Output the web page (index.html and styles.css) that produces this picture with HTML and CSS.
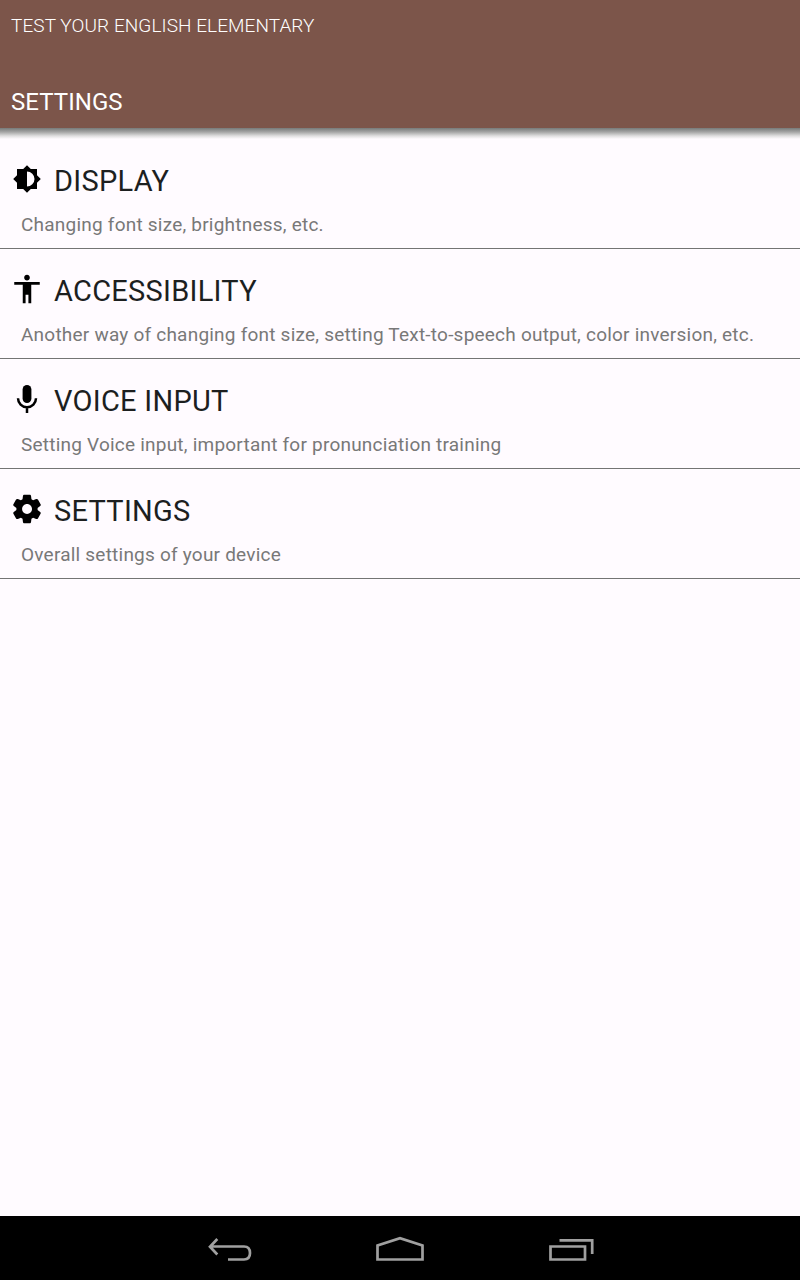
FILE: index.html
```
<!DOCTYPE html>
<html lang="en">
<head>
<meta charset="utf-8">
<title>Settings</title>
<link rel="stylesheet" href="styles.css">
</head>
<body>
<header class="header">
  <div class="app-name"><span>TEST YOUR ENGLISH ELEMENTARY</span></div>
  <h1 class="page-title">SETTINGS</h1>
</header>
<main class="content">
  <section class="item">
    <div class="row">
      <svg class="icon" viewBox="-17 -17 34 34"><path fill-rule="evenodd" d="M0-13.8L3.8-10H10V-3.8L13.8 0 10 3.8V10H3.8L0 13.8-3.8 10H-10V3.8L-13.8 0-10-3.8V-10H-3.8zM0-7.5V7.5A7.5 7.5 0 0 0 0-7.5z"/></svg>
      <h2 class="name">DISPLAY</h2>
    </div>
    <p class="desc">Changing font size, brightness, etc.</p>
  </section>
  <section class="item">
    <div class="row">
      <svg class="icon" viewBox="0 0 24 24"><path d="M12 2c1.1 0 2 .9 2 2s-.9 2-2 2-2-.9-2-2 .9-2 2-2zm9 7h-6v13h-2v-6h-2v6H9V9H3V7h18v2z"/></svg>
      <h2 class="name">ACCESSIBILITY</h2>
    </div>
    <p class="desc">Another way of changing font size, setting Text-to-speech output, color inversion, etc.</p>
  </section>
  <section class="item">
    <div class="row">
      <svg class="icon" viewBox="-17 -17 34 34"><rect x="-4.4" y="-14" width="8.8" height="18" rx="4.4"/><path class="mic-stand" d="M-9-.8a9 9 0 0 0 18 0M0 8.2V14"/></svg>
      <h2 class="name">VOICE INPUT</h2>
    </div>
    <p class="desc">Setting Voice input, important for pronunciation training</p>
  </section>
  <section class="item">
    <div class="row">
      <svg class="icon" viewBox="0 0 24 24"><path d="M19.5 12c0-.23-.01-.45-.03-.68l1.86-1.41c.4-.3.51-.86.26-1.3l-1.87-3.23c-.25-.44-.79-.62-1.25-.42l-2.15.91c-.37-.26-.76-.49-1.17-.68l-.29-2.31c-.06-.5-.49-.88-.99-.88h-3.73c-.51 0-.94.38-1 .88l-.29 2.31c-.41.19-.8.42-1.17.68l-2.15-.91c-.46-.2-1-.02-1.25.42L2.41 8.62c-.25.44-.14.99.26 1.3l1.86 1.41c-.02.22-.03.44-.03.67s.01.45.03.68l-1.86 1.41c-.4.3-.51.86-.26 1.3l1.87 3.23c.25.44.79.62 1.25.42l2.15-.91c.37.26.76.49 1.17.68l.29 2.31c.06.5.49.88.99.88h3.73c.5 0 .93-.38.99-.88l.29-2.31c.41-.19.8-.42 1.17-.68l2.15.91c.46.2 1 .02 1.25-.42l1.87-3.23c.25-.44.14-.99-.26-1.3l-1.86-1.41c.03-.23.04-.45.04-.68zm-7.46 3.5c-1.93 0-3.5-1.57-3.5-3.5s1.57-3.5 3.5-3.5 3.5 1.57 3.5 3.5-1.57 3.5-3.5 3.5z"/></svg>
      <h2 class="name">SETTINGS</h2>
    </div>
    <p class="desc">Overall settings of your device</p>
  </section>
</main>
<nav class="navbar">
  <svg class="nav-icon" viewBox="0 0 56 32"><path d="M17.3 7L10 14.8l7.3 7.7M10 14.5h34c4.2 0 6 3 6 6.5 0 4-1.8 6.5-6 6.5H28"/></svg>
  <svg class="nav-icon" viewBox="0 0 56 32"><path d="M5.5 27.5v-14L28 6.1l22.5 7.4v14z"/></svg>
  <svg class="nav-icon" viewBox="0 0 56 32"><path d="M6.5 14.5h34.5v13H6.5zM15.5 8.3h32.7V22"/></svg>
</nav>
</body>
</html>
```
FILE: styles.css
```
* { box-sizing: border-box; }
body {
  margin: 0;
  height: 1280px;
  display: flex;
  flex-direction: column;
  background: #fffbff;
  font-family: Roboto, "Noto Sans", sans-serif;
}
h1, h2, p { margin: 0; font-weight: 400; white-space: nowrap; }
.header {
  height: 128px;
  padding: 13px 11px 0;
  background: #7c554a;
  color: #fff;
}
.app-name { height: 75px; font-size: 19px; font-weight: 300; line-height: 26px; letter-spacing: .07px; }
.page-title { font-size: 24px; line-height: 28px; letter-spacing: .05px; }
.content {
  flex: 1;
  padding-top: 11px;
  background: linear-gradient(#777a79, #a5a5a5 4px, #e0dfe0 8px, #fffbff 11px) top / 100% 11px no-repeat;
}
.item { height: 110px; padding: 23px 0 0 10px; border-bottom: 1px solid #747474; }
.row { display: flex; gap: 10px; height: 37px; }
.icon { width: 34px; height: 34px; flex: none; }
.mic-stand { fill: none; stroke: #000; stroke-width: 2.5; }
.name { font-size: 29px; line-height: 38px; letter-spacing: .27px; color: #1c1f1f; }
.desc { padding: 13px 0 0 11px; font-size: 19px; line-height: 26px; letter-spacing: .22px; color: #787878; }
.navbar {
  height: 64px;
  display: flex;
  justify-content: center;
  align-items: center;
  gap: 116px;
  background: #000;
}
.nav-icon { width: 56px; height: 32px; fill: none; stroke: #a0a0a0; stroke-width: 2.7; }
```
